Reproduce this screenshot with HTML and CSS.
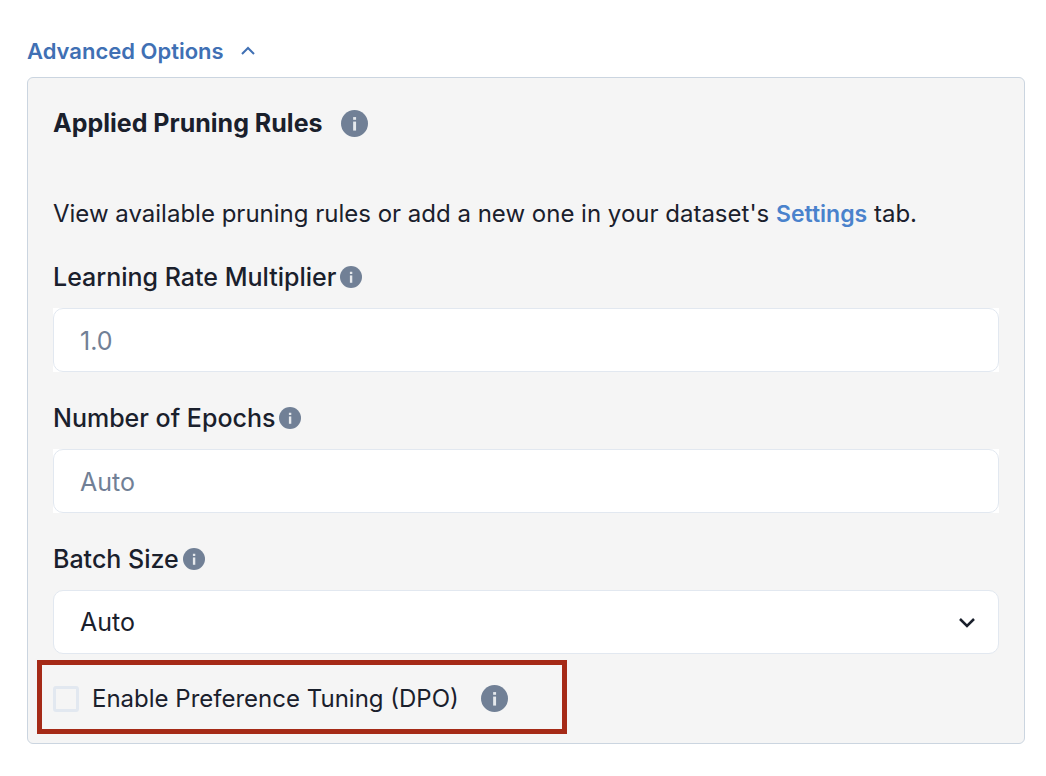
FILE: index.html
```html
<!DOCTYPE html>
<html lang="en">
<head>
	<meta charset="utf-8">
	<title>Advanced Options</title>
	<link rel="stylesheet" href="styles.css">
</head>
<body>
	<!-- shared icon -->
	<svg class="sprite" aria-hidden="true">
		<symbol id="info" viewBox="0 0 24 24">
			<circle cx="12" cy="12" r="12" fill="#718096"/>
			<rect x="10.8" y="6.3" width="2.6" height="2.4" fill="#e6e9ed"/>
			<rect x="10.8" y="10.3" width="2.6" height="8" fill="#e6e9ed"/>
		</symbol>
	</svg>

	<button class="toggle" type="button" aria-expanded="true" aria-controls="options">
		Advanced Options
		<svg class="toggle-icon" viewBox="0 0 16 16" aria-hidden="true"><path d="M2 11l6-6 6 6"/></svg>
	</button>

	<form class="panel" id="options">
		<h2 class="title">Applied Pruning Rules <svg class="info" aria-hidden="true"><use href="#info"/></svg></h2>
		<p class="intro">View available pruning rules or add a new one in your dataset's <a class="link" href="#settings">Settings</a> tab.</p>

		<div class="field">
			<label class="label" for="rate">Learning Rate Multiplier <svg class="info info-small" aria-hidden="true"><use href="#info"/></svg></label>
			<div class="input-wrap"><input class="control" id="rate" type="text" placeholder="1.0"></div>
		</div>
		<div class="field">
			<label class="label" for="epochs">Number of Epochs <svg class="info info-small" aria-hidden="true"><use href="#info"/></svg></label>
			<div class="input-wrap"><input class="control" id="epochs" type="text" placeholder="Auto"></div>
		</div>
		<div class="field">
			<label class="label" for="batch">Batch Size <svg class="info info-small" aria-hidden="true"><use href="#info"/></svg></label>
			<div class="select-wrap">
				<select class="control" id="batch">
					<option>Auto</option>
				</select>
				<svg class="select-icon" viewBox="0 0 16 16" aria-hidden="true"><path d="M1 5l7 7 7-7"/></svg>
			</div>
		</div>

		<div class="highlight">
			<input class="check" id="dpo" type="checkbox">
			<label class="check-label" for="dpo">Enable Preference Tuning (DPO)</label>
			<svg class="info" aria-hidden="true"><use href="#info"/></svg>
		</div>
	</form>
</body>
</html>
```

FILE: styles.css
```css
* {
	box-sizing: border-box;
}
body {
	margin: 0;
	padding: 35px 21px 32px 27px;
	background: #fff;
	color: #1a202c;
	font-family: Inter, "Liberation Sans", sans-serif;
	font-size: 24px;
	line-height: 32px;
}
.sprite {
	display: none;
}
.toggle {
	display: flex;
	align-items: center;
	gap: 16px;
	height: 32px;
	margin: 0 0 10px;
	padding: 0;
	border: 0;
	background: none;
	color: #4070b4;
	font: inherit;
	font-size: 22px;
	font-weight: 600;
	cursor: pointer;
}
.toggle-icon {
	width: 16px;
	height: 16px;
	fill: none;
	stroke: #4070b4;
	stroke-width: 2;
}
.panel {
	padding: 26px 25px 9px;
	border: 1px solid #cbd5e0;
	border-radius: 6px;
	background: #f5f5f5;
}
.title {
	display: flex;
	align-items: center;
	gap: 18px;
	height: 38px;
	margin: 0 0 56px;
	font-size: 25px;
	font-weight: 700;
}
.info {
	flex: none;
	width: 27px;
	height: 27px;
}
.info-small {
	width: 22px;
	height: 22px;
}
.intro {
	margin: 0 0 31px;
}
.link {
	color: #4a82cc;
	font-size: 23px;
	font-weight: 600;
	text-decoration: none;
}
.field {
	margin-bottom: 30px;
}
.label {
	display: flex;
	align-items: center;
	gap: 4px;
	margin-bottom: 15px;
	font-size: 25px;
	font-weight: 500;
}
.input-wrap {
	background: #fff;
}
.control {
	display: block;
	width: 100%;
	height: 64px;
	padding: 2px 26px 0;
	border: 1px solid #e2e8f0;
	border-radius: 10px;
	background: #fff;
	color: #1a202c;
	font: inherit;
	font-size: 25px;
	appearance: none;
}
.control::placeholder {
	color: #718096;
	opacity: 1;
}
select.control {
	padding-top: 0;
}
.select-wrap {
	position: relative;
}
/* chevron sits over the select */
.select-icon {
	position: absolute;
	top: 24px;
	right: 24px;
	width: 16px;
	height: 16px;
	fill: none;
	stroke: #1a202c;
	stroke-width: 2.5;
	pointer-events: none;
}
.highlight {
	display: flex;
	align-items: center;
	width: fit-content;
	height: 74px;
	margin: -24px 0 0 -16px;
	padding: 3px 54px 0 11px;
	border: 5px solid #a52a17;
}
.check {
	width: 26px;
	height: 26px;
	margin: 0 13px 0 0;
	border: 3px solid #e2e8f0;
	border-radius: 3px;
	appearance: none;
}
.check:checked {
	background: #4070b4;
}
.check-label {
	margin-right: 22px;
}
```
